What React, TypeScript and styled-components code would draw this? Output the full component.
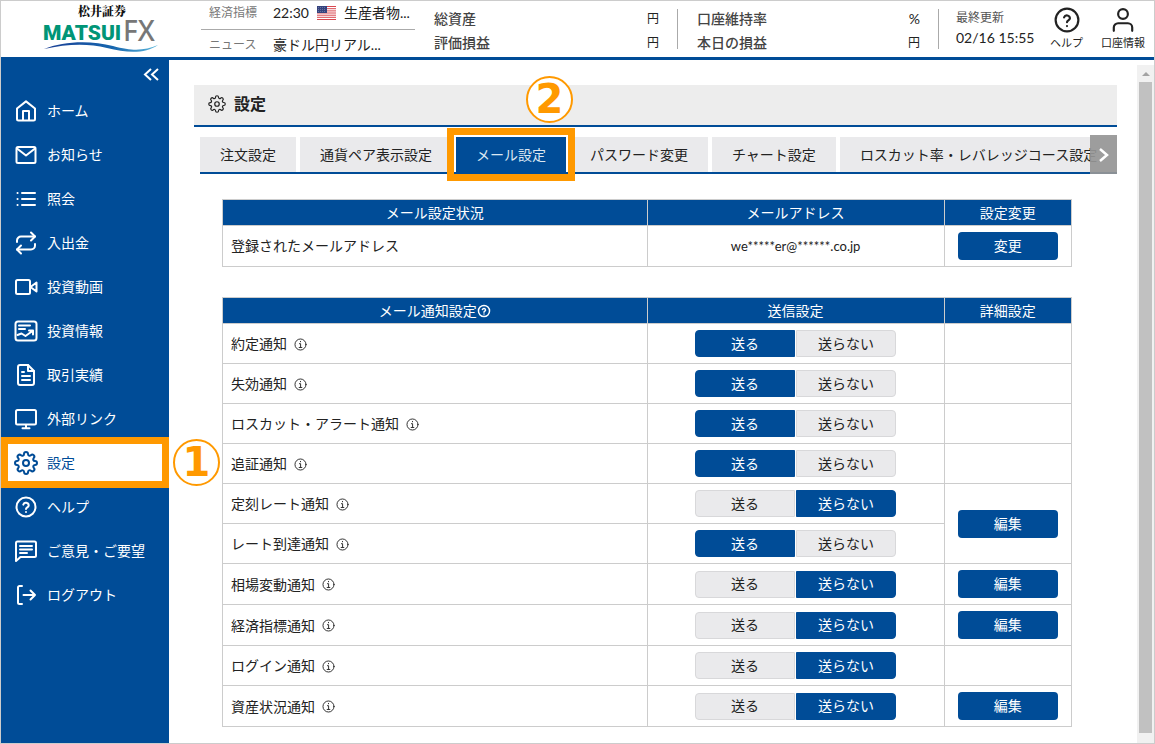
import React, { useState } from "react";
import styled, { createGlobalStyle, css } from "styled-components";

const BLUE = "#004c97";
const ORANGE = "#ff9900";
const LINE = "#cccccc";

const GlobalStyle = createGlobalStyle`
  *, *::before, *::after { box-sizing: border-box; }
  body {
    margin: 0;
    background: #fff;
    color: #222;
    font: 14px/20px Lato, "Noto Sans CJK JP", sans-serif;
  }
  button { font: inherit; border: 0; padding: 0; cursor: pointer; }
  a { color: inherit; text-decoration: none; }
  svg { display: block; flex: none; }
`;

const Page = styled.div`
  display: flex;
  flex-direction: column;
  min-height: 100vh;
  border: 1px solid ${LINE};
`;

/* ---------- header ---------- */

const Header = styled.header`
  display: flex;
  height: 59px;
  border-bottom: 3px solid ${BLUE};
`;

const LogoLink = styled.a`
  display: block;
  width: 200px;
  padding: 2px 0 0 40px;
`;

const Ticker = styled.dl`
  width: 214px;
  margin: 0;
`;

const TickerRow = styled.div`
  display: flex;
  align-items: center;
  gap: 16px;
  height: 28px;
  padding: 0 8px 4px;
  & + & {
    border-top: 1px solid #aaa;
    padding: 2px 8px 0;
  }
`;

const TickerLabel = styled.dt`
  flex: none;
  width: 48px;
  font-size: 12px;
  color: #777;
  white-space: nowrap;
`;

const TickerValue = styled.dd`
  display: flex;
  align-items: center;
  gap: 8px;
  margin: 0;
  white-space: nowrap;
`;

const Stats = styled.dl<{ $width: number }>`
  display: flex;
  flex-direction: column;
  gap: 4px;
  width: ${(p) => p.$width}px;
  height: 40px;
  margin: 8px 0 0;
  padding: 0 18px 0 19px;
  border-right: 1px solid #aaa;
`;

const StatRow = styled.div`
  display: flex;
  justify-content: space-between;
  align-items: center;
`;

const StatLabel = styled.dt`
  font-weight: 500;
  color: #444;
`;

const StatUnit = styled.dd<{ $large?: boolean }>`
  margin: 0;
  font-size: ${(p) => (p.$large ? 14 : 12)}px;
`;

const Updated = styled.div`
  flex: 1;
  padding: 7px 0 0 17px;
  white-space: nowrap;
`;

const UpdatedLabel = styled.div`
  font-size: 12px;
  color: #555;
`;

const HeaderActions = styled.nav`
  display: flex;
  gap: 18px;
  padding: 6px 9px 0 0;
`;

const HeaderAction = styled.a`
  display: flex;
  flex-direction: column;
  align-items: center;
  font-size: 11px;
`;

/* ---------- sidebar ---------- */

const Body = styled.div`
  display: flex;
  flex: 1;
`;

const Sidebar = styled.nav`
  width: 168px;
  background: ${BLUE};
  color: #fff;
`;

const Collapse = styled.button`
  display: block;
  margin: 6px 9px 6px auto;
  padding: 0;
  background: none;
  color: #fff;
`;

const Menu = styled.ul`
  list-style: none;
  margin: 0;
  padding: 0;
`;

const MenuItem = styled.li`
  position: relative;
`;

const MenuLink = styled.a<{ $active?: boolean }>`
  display: flex;
  align-items: center;
  gap: 9px;
  height: 44px;
  padding: 0 13px;
  white-space: nowrap;
  ${(p) => p.$active && css`background: #fff; color: ${BLUE};`}
`;

/* ---------- call-outs ---------- */

const Frame = styled.span<{ $inset: string }>`
  position: absolute;
  inset: ${(p) => p.$inset};
  border: 7px solid ${ORANGE};
  pointer-events: none;
  z-index: 1;
`;

const StepBadge = styled.span<{ $top: number; $left: number }>`
  position: absolute;
  top: ${(p) => p.$top}px;
  left: ${(p) => p.$left}px;
  display: grid;
  place-items: center;
  width: 47px;
  height: 47px;
  border: 2px solid ${ORANGE};
  border-radius: 50%;
  background: #fff;
  color: ${ORANGE};
  font: bold 40px/43px "DejaVu Sans", sans-serif;
  z-index: 2;
`;

/* ---------- content ---------- */

const Main = styled.main`
  flex: 1;
  min-width: 0;
  padding: 25px 20px 15px 25px;
`;

const TitleBar = styled.h1`
  display: flex;
  align-items: center;
  gap: 8px;
  height: 42px;
  margin: 0;
  padding: 0 14px 2px;
  border-bottom: 2px solid ${BLUE};
  background: #ededed;
  font-size: 16px;
  font-weight: 700;
`;

const TabBar = styled.div`
  position: relative;
  margin: 10px 0 0 6px;
  border-bottom: 2px solid ${BLUE};
`;

const TabStrip = styled.div`
  display: flex;
  gap: 4px;
  overflow-x: clip;
  overflow-y: visible;
`;

const TabSlot = styled.div`
  position: relative;
  flex: none;
`;

const Tab = styled.button<{ $active?: boolean }>`
  height: 35px;
  padding: 0 20px;
  background: ${(p) => (p.$active ? BLUE : "#eaeaec")};
  color: ${(p) => (p.$active ? "#dbe7f2" : "#222")};
  white-space: nowrap;
`;

const TabNext = styled.button`
  position: absolute;
  top: -2px;
  right: 0;
  bottom: -2px;
  display: grid;
  place-items: center;
  width: 27px;
  background: rgba(150, 150, 150, 0.92);
  color: #fff;
`;

const Tables = styled.div`
  display: flex;
  flex-direction: column;
  gap: 30px;
  padding: 25px 45px 0 28px;
`;

const DataTable = styled.table`
  width: 100%;
  table-layout: fixed;
  border-collapse: collapse;
`;

const Th = styled.th<{ $width: string }>`
  width: ${(p) => p.$width};
  height: 26px;
  padding: 0;
  border: 1px solid ${LINE};
  background: ${BLUE};
  color: #fff;
  font-weight: 400;
`;

const Td = styled.td<{ $center?: boolean }>`
  padding: 6px 8px;
  border: 1px solid ${LINE};
  text-align: ${(p) => (p.$center ? "center" : "left")};
`;

const Address = styled.span`
  font-size: 13px;
`;

const IconLabel = styled.span<{ $gap: number }>`
  display: inline-flex;
  align-items: center;
  gap: ${(p) => p.$gap}px;
  vertical-align: middle;
`;

const ActionButton = styled.button`
  display: block;
  width: 100px;
  height: 28px;
  margin: 0 auto;
  border-radius: 4px;
  background: ${BLUE};
  color: #fff;
`;

const Toggle = styled.div`
  display: flex;
  justify-content: center;
  gap: 1px;
`;

const ToggleButton = styled.button<{ $on: boolean }>`
  width: 100px;
  height: 27px;
  border: 1px solid ${(p) => (p.$on ? BLUE : "#d8d8da")};
  background: ${(p) => (p.$on ? BLUE : "#eaeaec")};
  color: ${(p) => (p.$on ? "#fff" : "#222")};
  line-height: 24px;
  &:first-child { border-radius: 4px 0 0 4px; }
  &:last-child { border-radius: 0 4px 4px 0; }
`;

/* ---------- scroll bar ---------- */

const ScrollTrack = styled.div`
  display: flex;
  flex-direction: column;
  align-items: center;
  width: 17px;
  margin-top: 5px;
  padding-bottom: 10px;
  background: #f1f1f1;
`;

const ScrollUp = styled.div`
  display: grid;
  place-items: center;
  height: 17px;
`;

const ScrollThumb = styled.div`
  flex: 1;
  width: 13px;
  background: #c1c1c1;
`;

/* ---------- icons ---------- */

type IconProps = { size?: number; stroke?: number; children: React.ReactNode };

const Icon = ({ size = 24, stroke = 2, children }: IconProps) => (
  <svg width={size} height={size} viewBox="0 0 24 24" fill="none" stroke="currentColor"
    strokeWidth={stroke} strokeLinecap="round" strokeLinejoin="round" aria-hidden="true">
    {children}
  </svg>
);

const Gear = () => (
  <>
    <circle cx="12" cy="12" r="3" />
    <path d="M19.4 15a1.65 1.65 0 0 0 .33 1.82l.06.06a2 2 0 0 1-2.83 2.83l-.06-.06a1.65 1.65 0 0 0-1.82-.33 1.65 1.65 0 0 0-1 1.51V21a2 2 0 0 1-4 0v-.09A1.65 1.65 0 0 0 9 19.4a1.65 1.65 0 0 0-1.82.33l-.06.06a2 2 0 0 1-2.83-2.83l.06-.06a1.65 1.65 0 0 0 .33-1.82 1.65 1.65 0 0 0-1.51-1H3a2 2 0 0 1 0-4h.09A1.65 1.65 0 0 0 4.6 9a1.65 1.65 0 0 0-.33-1.82l-.06-.06a2 2 0 0 1 2.83-2.83l.06.06a1.65 1.65 0 0 0 1.82.33H9a1.65 1.65 0 0 0 1-1.51V3a2 2 0 0 1 4 0v.09a1.65 1.65 0 0 0 1 1.51 1.65 1.65 0 0 0 1.82-.33l.06-.06a2 2 0 0 1 2.83 2.83l-.06.06a1.65 1.65 0 0 0-.33 1.82V9a1.65 1.65 0 0 0 1.51 1H21a2 2 0 0 1 0 4h-.09a1.65 1.65 0 0 0-1.51 1z" />
  </>
);

const Help = () => (
  <>
    <circle cx="12" cy="12" r="9.5" />
    <path d="M9.3 9.6a2.8 2.8 0 0 1 5.4.8c0 1.8-2.7 2-2.7 3.6" />
    <path d="M12 17v.1" />
  </>
);

const Info = () => (
  <Icon size={13} stroke={1.7}>
    <circle cx="12" cy="12" r="10.2" />
    <path d="M12 6.2v.8M10 10.5h2.200V17M9.500 17.500h5" />
  </Icon>
);

const Logo = () => (
  <svg width="122" height="52" viewBox="0 0 122 52" role="img" aria-label="松井証券 MATSUI FX">
    <defs>
      <linearGradient id="swoosh" x1="0" x2="1">
        <stop offset="0" stopColor="#1b3f95" />
        <stop offset="0.6" stopColor="#1665ae" />
        <stop offset="1" stopColor="#5cb8dc" />
      </linearGradient>
    </defs>
    <text x="37" y="13" fontSize="12" fontWeight="900" fill="#111" fontFamily="'Noto Serif CJK JP','Noto Sans CJK JP',sans-serif">松井証券</text>
    <text x="2" y="37" fontSize="21" fontWeight="900" fill="#009577" fontFamily="Roboto,sans-serif">MATSUI</text>
    <text x="82" y="38" fontSize="28" fontWeight="500" fill="#777" fontFamily="'Noto Sans',Lato,sans-serif">FX</text>
    <path d="M3 46C22 38 50 37 72 43S104 47 117 42C104 51 86 50 66 45S26 41 3 46Z" fill="url(#swoosh)" />
  </svg>
);

const Flag = () => (
  <svg width="19" height="14" viewBox="0 0 19 14" role="img" aria-label="USA">
    <rect width="19" height="14" fill="#fff" />
    <path d="M0 .5h19M0 2.7h19M0 4.9h19M0 7h19M0 9.2h19M0 11.3h19M0 13.5h19" stroke="#d8474f" />
    <rect width="10" height="7" fill="#35437e" />
    <path d="M1 1.5h8M1 3.5h8M1 5.5h8" stroke="#8a93bb" strokeDasharray="1 1" strokeWidth=".6" />
  </svg>
);

/* ---------- data ---------- */

const menu: { label: string; icon: React.ReactNode; active?: boolean }[] = [
  { label: "ホーム", icon: <><path d="M3 9.5 12 2.400l9 7.100v10.500a1.500 1.500 0 0 1-1.500 1.500h-15A1.500 1.500 0 0 1 3 20z" /><path d="M9 21v-9h6v9" /></> },
  { label: "お知らせ", icon: <><rect x="2.5" y="4" width="19" height="16" rx="1.5" /><path d="m3 5.500 9 7 9-7" /></> },
  { label: "照会", icon: <><path d="M8 6h13M8 12h13M8 18h13" /><path d="M3.5 6h.1M3.5 12h.1M3.5 18h.1" /></> },
  { label: "入出金", icon: <><path d="m17 1.500 4 4-4 4" /><path d="M3 11V9.500a4 4 0 0 1 4-4h14M7 22.500l-4-4 4-4" /><path d="M21 13v1.500a4 4 0 0 1-4 4H3" /></> },
  { label: "投資動画", icon: <><rect x="2" y="5" width="14" height="14" rx="1.5" /><path d="m16.500 12 6-4.500v9z" /></> },
  { label: "投資情報", icon: <><rect x="1.5" y="2.5" width="21" height="19" rx="2.5" /><path d="M5 6.5h11M5 10h6" /><path d="m3.500 16 4-1.500 4 2.500 7-5M15 11.500h4v4" /></> },
  { label: "取引実績", icon: <><path d="M14 2H6a2 2 0 0 0-2 2v16a2 2 0 0 0 2 2h12a2 2 0 0 0 2-2V8z" /><path d="M14 2v6h6M8 13h8M8 17h8M8 9h2" /></> },
  { label: "外部リンク", icon: <><rect x="2" y="3" width="20" height="14.500" rx="1.500" /><path d="M12 18v3M8.500 21.300h7" /></> },
  { label: "設定", icon: <Gear />, active: true },
  { label: "ヘルプ", icon: <Help /> },
  { label: "ご意見・ご要望", icon: <><path d="M2 22V4a1.500 1.500 0 0 1 1.500-1.500h17A1.500 1.500 0 0 1 22 4v12.500a1.500 1.500 0 0 1-1.500 1.500H6.500z" /><path d="M6 7h12M6 10.500h12M6 14h7" /></> },
  { label: "ログアウト", icon: <><path d="M8 3H5.500A1.500 1.500 0 0 0 4 4.500v15A1.500 1.500 0 0 0 5.500 21H8" /><path d="M9.500 12H21M16.500 7.500 21 12l-4.500 4.500" /></> },
];

const tabs = ["注文設定", "通貨ペア表示設定", "メール設定", "パスワード変更", "チャート設定", "ロスカット率・レバレッジコース設定"];

type Notice = { name: string; send: boolean; edit?: number | "merged" };

const notices: Notice[] = [
  { name: "約定通知", send: true },
  { name: "失効通知", send: true },
  { name: "ロスカット・アラート通知", send: true },
  { name: "追証通知", send: true },
  { name: "定刻レート通知", send: false, edit: 2 },
  { name: "レート到達通知", send: true, edit: "merged" },
  { name: "相場変動通知", send: false, edit: 1 },
  { name: "経済指標通知", send: false, edit: 1 },
  { name: "ログイン通知", send: false },
  { name: "資産状況通知", send: false, edit: 1 },
];

const NoticeRow = ({ name, send, edit }: Notice) => {
  const [on, setOn] = useState(send);
  return (
    <tr>
      <Td><IconLabel $gap={7}>{name}<Info /></IconLabel></Td>
      <Td $center>
        <Toggle role="group" aria-label={name}>
          <ToggleButton type="button" $on={on} aria-pressed={on} onClick={() => setOn(true)}>送る</ToggleButton>
          <ToggleButton type="button" $on={!on} aria-pressed={!on} onClick={() => setOn(false)}>送らない</ToggleButton>
        </Toggle>
      </Td>
      {edit !== "merged" && (
        <Td $center rowSpan={edit ?? 1}>{edit && <ActionButton type="button">編集</ActionButton>}</Td>
      )}
    </tr>
  );
};

export default function App() {
  return (
    <>
      <GlobalStyle />
      <Page>
        <Header>
          <LogoLink href="#"><Logo /></LogoLink>
          <Ticker>
            <TickerRow>
              <TickerLabel>経済指標</TickerLabel>
              <TickerValue><span>22:30</span><Flag /><span>生産者物...</span></TickerValue>
            </TickerRow>
            <TickerRow>
              <TickerLabel>ニュース</TickerLabel>
              <TickerValue>豪ドル円リアル...</TickerValue>
            </TickerRow>
          </Ticker>
          <Stats $width={263}>
            <StatRow><StatLabel>総資産</StatLabel><StatUnit>円</StatUnit></StatRow>
            <StatRow><StatLabel>評価損益</StatLabel><StatUnit>円</StatUnit></StatRow>
          </Stats>
          <Stats $width={261}>
            <StatRow><StatLabel>口座維持率</StatLabel><StatUnit $large>%</StatUnit></StatRow>
            <StatRow><StatLabel>本日の損益</StatLabel><StatUnit>円</StatUnit></StatRow>
          </Stats>
          <Updated>
            <UpdatedLabel>最終更新</UpdatedLabel>
            <time>02/16 15:55</time>
          </Updated>
          <HeaderActions>
            <HeaderAction href="#"><Icon size={26}><circle cx="12" cy="12" r="10.500" /><path d="M9.300 9.600a2.800 2.800 0 0 1 5.400.8c0 1.800-2.700 2-2.700 3.600M12 17.500v.1" /></Icon>ヘルプ</HeaderAction>
            <HeaderAction href="#"><Icon size={26}><circle cx="12" cy="6.500" r="4.500" /><path d="M3.500 22v-3a4 4 0 0 1 4-4h9a4 4 0 0 1 4 4v3" /></Icon>口座情報</HeaderAction>
          </HeaderActions>
        </Header>
        <Body>
          <Sidebar>
            <Collapse type="button" aria-label="メニューを閉じる">
              <svg width="18" height="17" viewBox="0 0 18 17" fill="none" stroke="currentColor" strokeWidth="2">
                <path d="M9 3 3 8.500 9 14M16 3l-6 5.500 6 5.500" />
              </svg>
            </Collapse>
            <Menu>
              {menu.map((m) => (
                <MenuItem key={m.label}>
                  <MenuLink href="#" $active={m.active}><Icon>{m.icon}</Icon>{m.label}</MenuLink>
                  {m.active && <><Frame $inset="-4px 0 -3px" /><StepBadge $top={-2} $left={172}>1</StepBadge></>}
                </MenuItem>
              ))}
            </Menu>
          </Sidebar>
          <Main>
            <TitleBar><Icon size={18} stroke={1.6}><Gear /></Icon>設定</TitleBar>
            <TabBar>
              <TabStrip role="tablist">
                {tabs.map((t) => {
                  const active = t === "メール設定";
                  return (
                    <TabSlot key={t}>
                      <Tab type="button" role="tab" aria-selected={active} $active={active}>{t}</Tab>
                      {active && <><Frame $inset="-9px" /><StepBadge $top={-61} $left={70}>2</StepBadge></>}
                    </TabSlot>
                  );
                })}
              </TabStrip>
              <TabNext type="button" aria-label="次へ">
                <svg width="12" height="16" viewBox="0 0 12 16" fill="none" stroke="currentColor" strokeWidth="2.500"><path d="m2 2 7 6-7 6" /></svg>
              </TabNext>
            </TabBar>
            <Tables>
              <DataTable>
                <thead>
                  <tr><Th $width="50%">メール設定状況</Th><Th $width="35%">メールアドレス</Th><Th $width="15%">設定変更</Th></tr>
                </thead>
                <tbody>
                  <tr>
                    <Td>登録されたメールアドレス</Td>
                    <Td $center><Address>we*****er@******.co.jp</Address></Td>
                    <Td $center><ActionButton type="button">変更</ActionButton></Td>
                  </tr>
                </tbody>
              </DataTable>
              <DataTable>
                <thead>
                  <tr>
                    <Th $width="50%"><IconLabel $gap={0}>メール通知設定<Icon size={14} stroke={2.5}><Help /></Icon></IconLabel></Th>
                    <Th $width="35%">送信設定</Th>
                    <Th $width="15%">詳細設定</Th>
                  </tr>
                </thead>
                <tbody>{notices.map((n) => <NoticeRow key={n.name} {...n} />)}</tbody>
              </DataTable>
            </Tables>
          </Main>
          <ScrollTrack aria-hidden="true">
            <ScrollUp><svg width="8" height="4" viewBox="0 0 8 4"><path d="M0 4 4 0l4 4z" fill="#a3a3a3" /></svg></ScrollUp>
            <ScrollThumb />
          </ScrollTrack>
        </Body>
      </Page>
    </>
  );
}
